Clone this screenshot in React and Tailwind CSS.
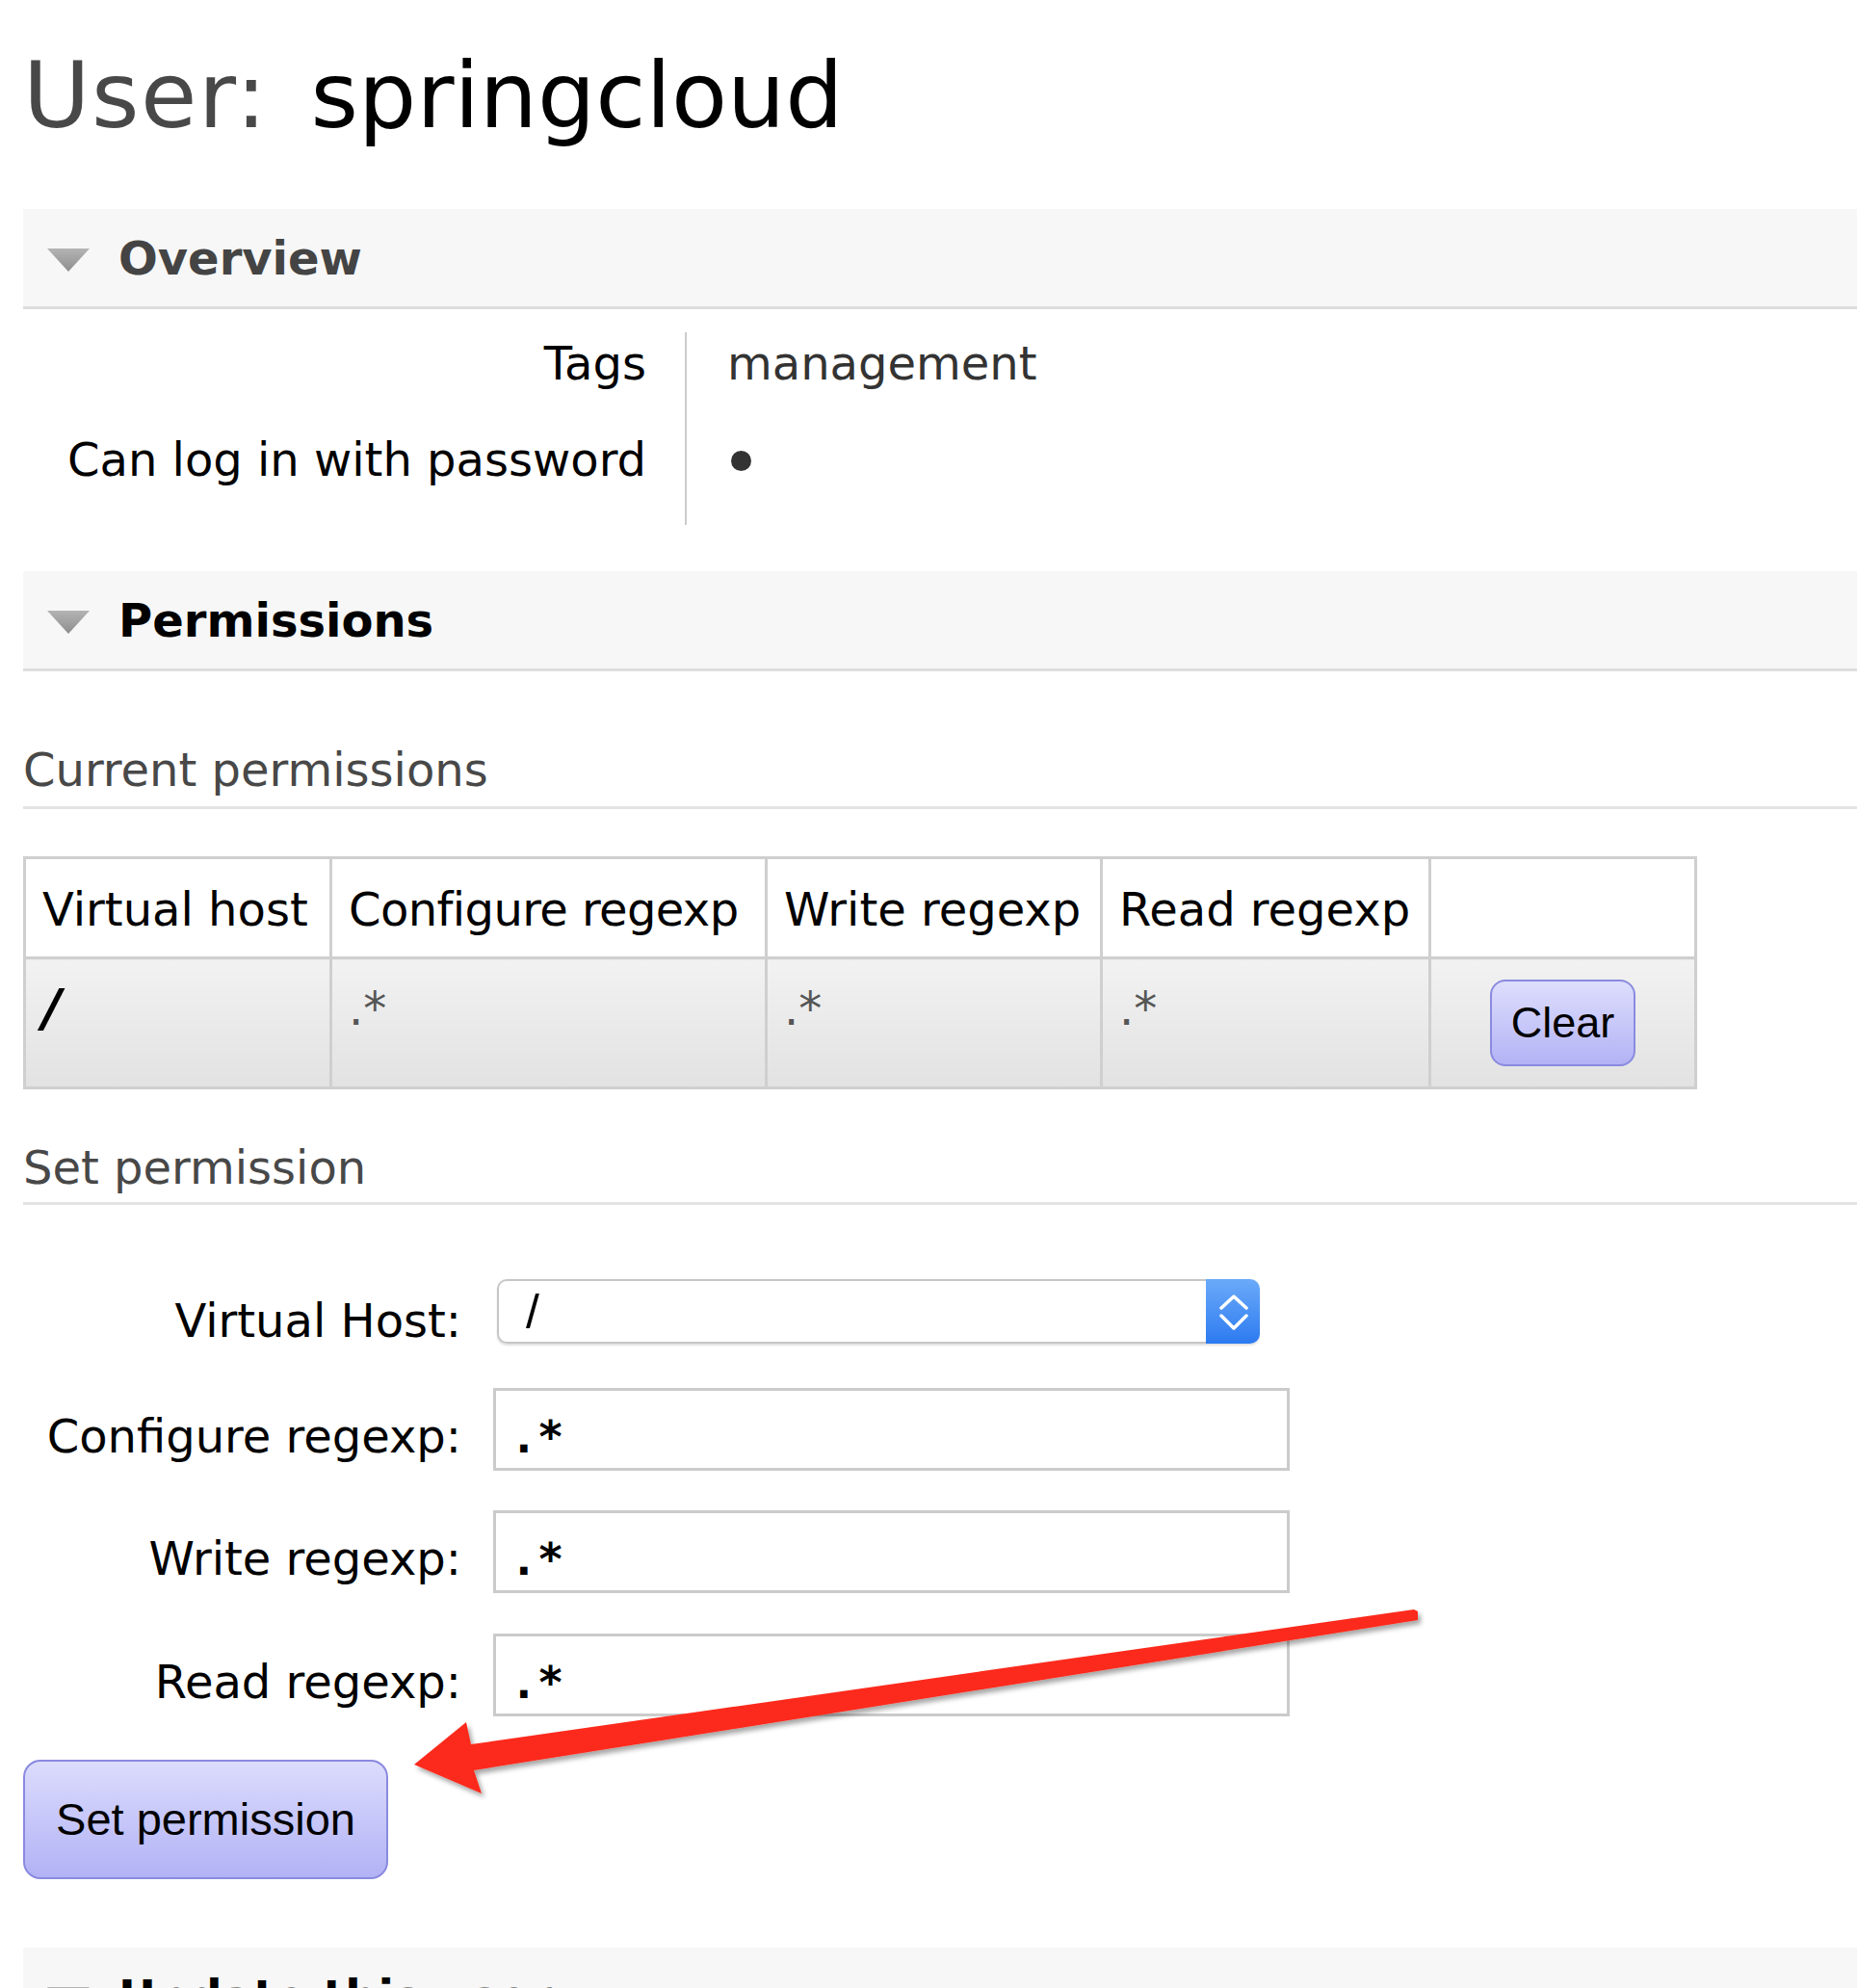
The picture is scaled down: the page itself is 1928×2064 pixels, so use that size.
import React from "react";

function Disclosure() {
  return (
    <svg width="44" height="24" viewBox="0 0 44 24" className="mt-[4px] shrink-0">
      <defs>
        <linearGradient id="tri" x1="0" y1="0" x2="0" y2="1">
          <stop offset="0" stopColor="#b4b4b4" />
          <stop offset="1" stopColor="#8e8e8e" />
        </linearGradient>
      </defs>
      <polygon points="0,0 44,0 22,24" fill="url(#tri)" />
    </svg>
  );
}

function SectionBar({ title, className = "" }) {
  return (
    <div className={`flex h-[104px] items-center border-b-[3px] border-[#dddddd] bg-[#f7f7f7] pl-[25px] ${className}`}>
      <Disclosure />
      <h2 className="ml-[30px] text-[48px] font-bold leading-[56px]">{title}</h2>
    </div>
  );
}

function RegexpRow({ label, className = "" }) {
  return (
    <div className={`flex items-start ${className}`}>
      <label className="w-[455px] pt-[22px] text-right text-[48px] leading-[56px]">{label}</label>
      <input
        readOnly
        value=".*"
        className="ml-[33px] h-[86px] w-[827px] border-[3px] border-[#cbcbcb] bg-white pl-[15px] pt-[16px] font-['DejaVu_Sans_Mono',monospace] text-[46px] font-bold text-black outline-none"
      />
    </div>
  );
}

export default function App() {
  const th = "whitespace-nowrap border-[3px] border-[#cfcfcf] px-[17px] pt-[24px] pb-[21px] text-left font-normal leading-[56px]";
  const td = "border-[3px] border-[#cfcfcf] bg-linear-to-b from-[#f2f2f2] to-[#e2e2e2] px-[17px] pt-[23px] align-top leading-[56px] text-[#555]";

  return (
    <div className="relative min-h-screen overflow-hidden bg-white pl-[24px] pt-[43px] font-['DejaVu_Sans',sans-serif] text-[48px] text-black">
      <h1 className="text-[95px] leading-[112px] text-[#484848]">
        <span className="tracking-[1.5px]">User:</span> <span className="ml-[14px] text-black">springcloud</span>
      </h1>

      <SectionBar title="Overview" className="mt-[62px] text-[#444]" />

      {/* overview rows */}
      <div className="mt-[24px] flex">
        <div className="w-[689px] border-r-2 border-[#cccccc] pr-[40px] text-right">
          <div className="pt-[4px] pb-[40px] leading-[56px]">Tags</div>
          <div className="pt-[4px] pb-[40px] leading-[56px]">Can log in with password</div>
        </div>
        <div className="pl-[42px] text-[#333]">
          <div className="pt-[4px] pb-[40px] leading-[56px]">management</div>
          <div className="flex h-[100px] items-start pt-[23px]">
            <span className="ml-[4px] inline-block h-[21px] w-[21px] rounded-full bg-[#333]" />
          </div>
        </div>
      </div>

      <SectionBar title="Permissions" className="mt-[48px] text-black" />

      <h3 className="mt-[74px] border-b-[3px] border-[#e3e3e3] pb-[10px] text-[48px] font-normal leading-[56px] text-[#484848]">
        Current permissions
      </h3>

      <table className="mt-[49px] w-[1735px] table-fixed border-collapse">
        <thead>
          <tr className="bg-white">
            <th className={`${th} w-[318px]`}>Virtual host</th>
            <th className={`${th} w-[452px] tracking-[-0.6px]`}>Configure regexp</th>
            <th className={`${th} w-[348px]`}>Write regexp</th>
            <th className={`${th} w-[341px]`}>Read regexp</th>
            <th className={`${th} w-[276px]`}></th>
          </tr>
        </thead>
        <tbody>
          <tr>
            <td className={td}>
              <span className="text-[54px] font-bold italic text-black">/</span>
            </td>
            <td className={td}>.*</td>
            <td className={td}>.*</td>
            <td className={td}>.*</td>
            <td className="border-[3px] border-[#cfcfcf] bg-linear-to-b from-[#f2f2f2] to-[#e2e2e2] py-[21px] text-center align-middle">
              <button className="h-[90px] w-[151px] rounded-[16px] border-2 border-[#8a8ae0] bg-linear-to-b from-[#dedefd] to-[#b3b3f5] font-['Liberation_Sans',sans-serif] text-[45px] text-black">
                Clear
              </button>
            </td>
          </tr>
        </tbody>
      </table>

      <h3 className="mt-[53px] border-b-[3px] border-[#e3e3e3] pb-[8px] text-[48px] font-normal leading-[56px] text-[#484848]">
        Set permission
      </h3>

      {/* form */}
      <div className="mt-[77px] flex items-start">
        <label className="w-[455px] pt-[15px] text-right text-[48px] leading-[56px]">Virtual Host:</label>
        <div className="ml-[37px] flex h-[67px] w-[792px] rounded-[10px] shadow-[0_2px_2px_rgba(0,0,0,0.12)]">
          <div className="flex flex-1 items-center rounded-l-[10px] border-2 border-r-0 border-[#c6c6c6] bg-white pl-[28px] font-['Liberation_Sans',sans-serif] text-[50px] leading-none">
            /
          </div>
          <div className="flex w-[56px] items-center justify-center rounded-r-[10px] bg-linear-to-b from-[#6aaaf9] to-[#2c7af0]">
            <svg width="56" height="67" viewBox="0 0 56 67">
              <polyline points="16,30 29,18 42,30" fill="none" stroke="#fff" strokeWidth="3.5" strokeLinecap="round" strokeLinejoin="round" />
              <polyline points="16,38 29,51 42,38" fill="none" stroke="#fff" strokeWidth="3.5" strokeLinecap="round" strokeLinejoin="round" />
            </svg>
          </div>
        </div>
      </div>

      <RegexpRow label="Configure regexp:" className="mt-[42px]" />
      <RegexpRow label="Write regexp:" className="mt-[41px]" />
      <RegexpRow label="Read regexp:" className="mt-[42px]" />

      <button className="mt-[45px] block h-[124px] w-[379px] rounded-[18px] border-2 border-[#8a8ae0] bg-linear-to-b from-[#dcdcfd] to-[#b2b2f5] font-['Liberation_Sans',sans-serif] text-[47px] text-black">
        Set permission
      </button>

      <SectionBar title="Update this user" className="mt-[71px] text-black" />
      <div className="h-[200px]" />

      {/* annotation arrow */}
      <svg
        className="pointer-events-none absolute left-[410px] top-[1650px]"
        width="1080"
        height="230"
        viewBox="410 1650 1080 230"
      >
        <defs>
          <filter id="shadow" x="-5%" y="-20%" width="110%" height="150%">
            <feDropShadow dx="3" dy="4" stdDeviation="2.5" floodColor="#000" floodOpacity="0.35" />
          </filter>
        </defs>
        <polygon
          points="1468,1671 1472,1673 1472,1682 492,1838 500,1862 430,1832 484,1788 489,1811"
          fill="#fc2b1d"
          filter="url(#shadow)"
        />
      </svg>
    </div>
  );
}
